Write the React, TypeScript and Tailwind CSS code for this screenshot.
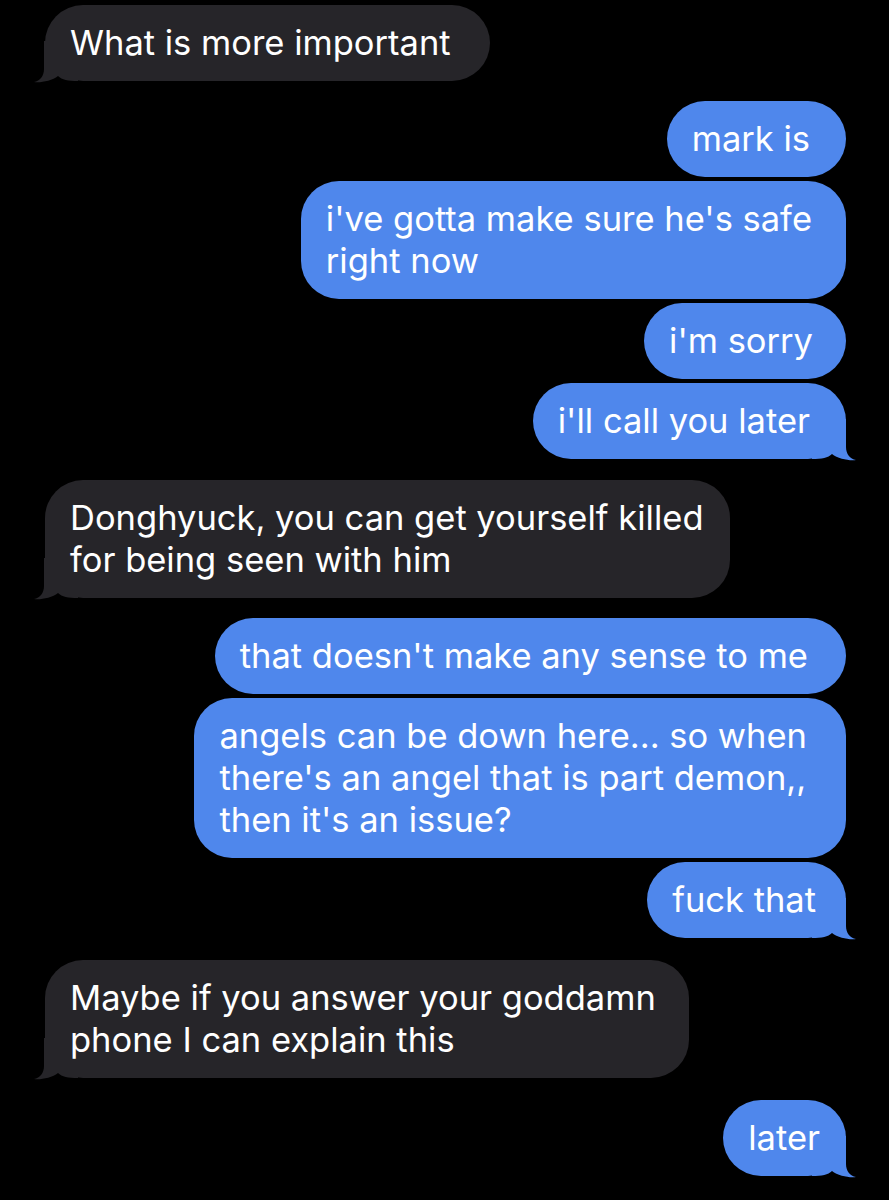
import React from "react";

type Msg = { lines: string[]; tail?: boolean; pr?: string };

const BLUE = "#4f87ec";
const GRAY = "#262529";

function RightTail() {
  return (
    <svg
      className="absolute -right-[12px] -bottom-[2px]"
      width="48"
      height="44"
      viewBox="0 0 48 44"
    >
      <path
        d="M 36 2 L 36 30 C 36 37, 40 42, 46 43 C 40 44, 28 42, 22 37 C 18 41, 12 42, 2 42 L 2 2 Z"
        fill={BLUE}
      />
    </svg>
  );
}

function LeftTail() {
  return (
    <svg
      className="absolute -left-[13px] -bottom-[2px]"
      width="48"
      height="44"
      viewBox="0 0 48 44"
    >
      <path
        d="M 12 2 L 12 30 C 12 37, 8 42, 2 43 C 8 44, 20 42, 26 37 C 30 41, 36 42, 46 42 L 46 2 Z"
        fill={GRAY}
      />
    </svg>
  );
}

function Bubble({ m, out }: { m: Msg; out: boolean }) {
  return (
    <div
      className={`relative inline-block rounded-[38px] py-[17px] pl-[25px] ${m.pr ?? "pr-[36px]"} text-white text-[34.5px] leading-[42px] whitespace-nowrap ${
        out ? "bg-[#4f87ec]" : "bg-[#262529]"
      }`}
    >
      {m.tail && (out ? <RightTail /> : <LeftTail />)}
      <span className="relative">
        {m.lines.map((l, i) => (
          <React.Fragment key={i}>
            {i > 0 && <br />}
            {l}
          </React.Fragment>
        ))}
      </span>
    </div>
  );
}

function Group({ msgs, out, className }: { msgs: Msg[]; out: boolean; className?: string }) {
  return (
    <div className={`flex flex-col gap-[4px] ${out ? "items-end" : "items-start"} ${className ?? ""}`}>
      {msgs.map((m, i) => (
        <Bubble key={i} m={m} out={out} />
      ))}
    </div>
  );
}

export default function App() {
  return (
    <div
      className="w-[889px] h-[1200px] bg-black overflow-hidden pl-[45px] pr-[43px] pt-[5px] flex flex-col"
      style={{ fontFamily: "Inter, 'Noto Sans', 'Liberation Sans', sans-serif" }}
    >
      <Group out={false} msgs={[{ lines: ["What is more important"], tail: true, pr: "pr-[39px]" }]} />
      <Group
        out
        className="mt-[20px]"
        msgs={[
          { lines: ["mark is"] },
          { lines: ["i've gotta make sure he's safe", "right now"], pr: "pr-[34px]" },
          { lines: ["i'm sorry"], pr: "pr-[33px]" },
          { lines: ["i'll call you later"], tail: true },
        ]}
      />
      <Group
        out={false}
        className="mt-[21px]"
        msgs={[
          {
            lines: ["Donghyuck, you can get yourself killed", "for being seen with him"],
            tail: true,
            pr: "pr-[26px]",
          },
        ]}
      />
      <Group
        out
        className="mt-[20px]"
        msgs={[
          { lines: ["that doesn't make any sense to me"], pr: "pr-[38px]" },
          {
            lines: [
              "angels can be down here... so when",
              "there's an angel that is part demon,,",
              "then it's an issue?",
            ],
            pr: "pr-[39px]",
          },
          { lines: ["fuck that"], tail: true, pr: "pr-[30px]" },
        ]}
      />
      <Group
        out={false}
        className="mt-[22px]"
        msgs={[
          {
            lines: ["Maybe if you answer your goddamn", "phone I can explain this"],
            tail: true,
            pr: "pr-[33px]",
          },
        ]}
      />
      <Group out className="mt-[22px]" msgs={[{ lines: ["later"], tail: true, pr: "pr-[26px]" }]} />
    </div>
  );
}
